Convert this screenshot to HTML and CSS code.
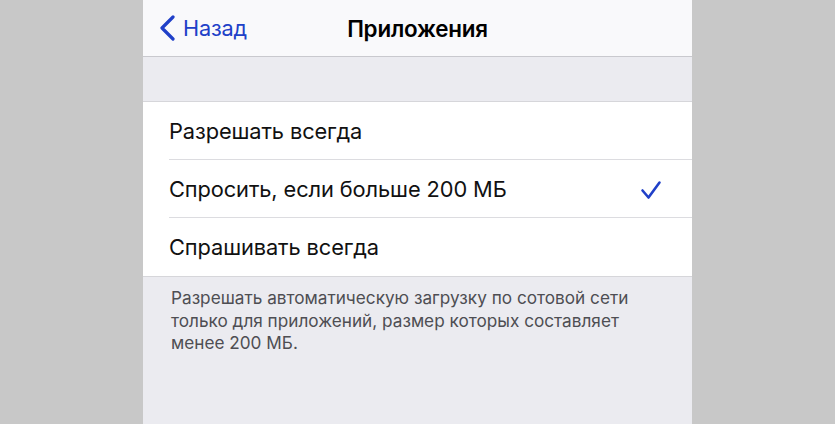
FILE: index.html
```html
<!DOCTYPE html>
<html lang="ru">
<head>
<meta charset="utf-8">
<link rel="stylesheet" href="styles.css">
</head>
<body>
<div class="phone">
  <header class="nav">
    <a class="back">
      <svg class="chev" width="18" height="26" viewBox="0 0 18 26"><path d="M15 2 L4 13 L15 24" fill="none" stroke="#2040c8" stroke-width="3.2" stroke-linecap="round" stroke-linejoin="round"/></svg>
      <span>Назад</span>
    </a>
    <h1 class="title">Приложения</h1>
  </header>
  <div class="spacer"></div>
  <ul class="list">
    <li class="row"><span>Разрешать всегда</span></li>
    <li class="row"><span>Спросить, если больше 200 МБ</span>
      <svg class="check" width="22" height="20" viewBox="0 0 22 20"><path d="M2.5 10.5 L8.5 17.5 L19.5 2.5" fill="none" stroke="#2040c8" stroke-width="2.6" stroke-linecap="round" stroke-linejoin="round"/></svg>
    </li>
    <li class="row"><span>Спрашивать всегда</span></li>
  </ul>
  <p class="footer">Разрешать автоматическую загрузку по сотовой сети только для приложений, размер которых составляет менее 200&nbsp;МБ.</p>
</div>
</body>
</html>
```
FILE: styles.css
```css
html, body {
  margin: 0;
  padding: 0;
  height: 100%;
  overflow: hidden;
}
body {
  background: #c8c8c8;
  font-family: "Inter", "Noto Sans", sans-serif;
}
.phone {
  width: 549px;
  height: 424px;
  margin: 0 auto;
  background: #ebebf0;
}
.nav {
  height: 56px;
  background: #f9f9fb;
  border-bottom: 1px solid #c9c9ce;
  display: flex;
  align-items: center;
  justify-content: center;
  position: relative;
}
.back {
  position: absolute;
  left: 15px;
  top: 15px;
  display: flex;
  align-items: center;
  gap: 7px;
  color: #2040c8;
  font-size: 21.7px;
  letter-spacing: -0.2px;
}
.title {
  margin: 0;
  font-size: 22.4px;
  font-weight: 600;
  color: #000;
  letter-spacing: -0.2px;
}
.spacer {
  height: 44px;
  border-bottom: 1px solid #d6d6da;
}
.list {
  list-style: none;
  margin: 0;
  padding: 0 0 0 26px;
  background: #fff;
  border-bottom: 1px solid #d6d6da;
}
.row {
  height: 57px;
  display: flex;
  align-items: center;
  justify-content: space-between;
  padding-right: 30px;
  font-size: 21.8px;
  color: #111;
  letter-spacing: -0.1px;
  border-bottom: 1px solid #dcdce0;
}
.row:last-child {
  border-bottom: none;
  height: 58px;
}
.check {
  margin-top: 2px;
}
.footer {
  margin: 0;
  padding: 10px 40px 0 28px;
  font-size: 17.2px;
  line-height: 22.5px;
  color: #4e4e53;
}
```
